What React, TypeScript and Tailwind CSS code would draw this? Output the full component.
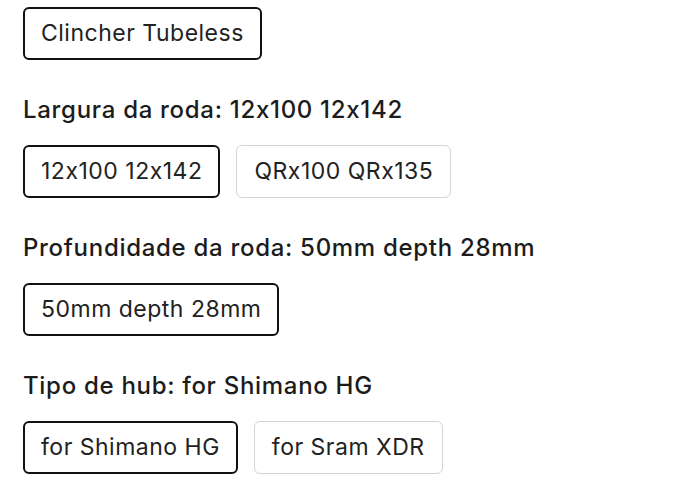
import React from "react";

type Group = {
  label?: string;
  options: string[];
  selected: number;
};

const groups: Group[] = [
  { options: ["Clincher Tubeless"], selected: 0 },
  { label: "Largura da roda: 12x100 12x142", options: ["12x100 12x142", "QRx100 QRx135"], selected: 0 },
  { label: "Profundidade da roda: 50mm depth 28mm", options: ["50mm depth 28mm"], selected: 0 },
  { label: "Tipo de hub: for Shimano HG", options: ["for Shimano HG", "for Sram XDR"], selected: 0 },
];

export default function App() {
  return (
    <div className="w-[700px] h-[480px] bg-white overflow-hidden px-[23px] pt-[7px] text-[#1a1a1a] [font-family:Inter,'Open_Sans',sans-serif] [font-feature-settings:'calt'_0]">
      {groups.map((g, gi) => (
        <div key={gi}>
          {g.label && (
            <h3 className="mt-[34px] mb-[19px] text-[24px] leading-[32px] font-medium tracking-[0.7px] text-[#1c1c1c]">
              {g.label}
            </h3>
          )}
          <div className="flex gap-4">
            {g.options.map((o, oi) => (
              <button
                key={oi}
                className={
                  oi === g.selected
                    ? "h-[53px] px-[16px] rounded-[6px] border-2 border-[#111] bg-white text-[23px] tracking-[0.5px] text-[#222]"
                    : "h-[53px] px-[17px] rounded-[6px] border border-[#d4d4d4] bg-white text-[23px] tracking-[0.5px] text-[#222]"
                }
              >
                {o}
              </button>
            ))}
          </div>
        </div>
      ))}
    </div>
  );
}
